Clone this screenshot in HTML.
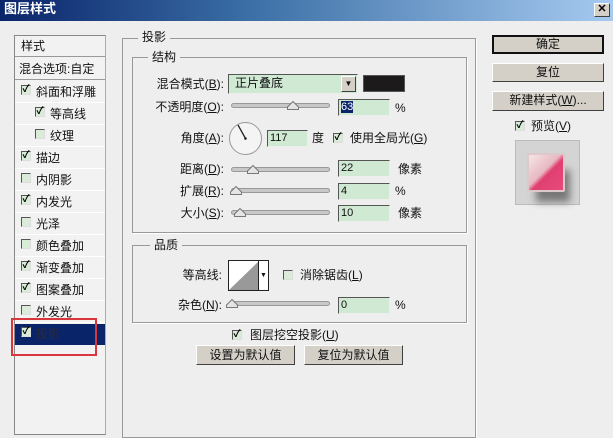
<!DOCTYPE html>
<html><head><meta charset="utf-8"><style>
*{margin:0;padding:0;box-sizing:border-box}
body{width:613px;height:426px;overflow:hidden;background:#eeeeee;font-family:"Liberation Sans","Noto Sans CJK SC","WenQuanYi Zen Hei",sans-serif;font-size:12px;color:#111;position:relative}
.a{position:absolute;white-space:nowrap;line-height:14px}
.title{left:0;top:0;width:613px;height:21px;background:linear-gradient(90deg,#0a246a 0%,#3a6ea5 40%,#a6caf0 100%);color:#fff;font-weight:bold;font-size:13px;padding:2px 0 0 4px}
.x{right:3px;top:3px;width:16px;height:14px;background:#d4d0c8;border:1px solid;border-color:#fff #404040 #404040 #fff;font-size:11px;text-align:center;line-height:11px;color:#000;font-weight:bold}
.panel{left:14px;top:35px;width:92px;height:400px;border:1px solid #888;border-right-color:#aaa;background:#f2f2f2}
.row{position:absolute;left:0;width:90px;height:22px;border-bottom:1px solid #fff}
.cb{position:absolute;width:10px;height:10px;border:1px solid;border-color:#555 #ddd #ddd #555;background:#d8ecd8;font-size:10px;line-height:8px;text-align:center;font-weight:bold;color:#000}
.grp{border:1px solid #999;box-shadow:1px 1px 0 #fff}
.inp{position:absolute;height:17px;background:#cfe9d3;border:1px solid;border-color:#555 #eee #eee #555;padding-left:2px;line-height:14px;font-size:11px}
.trk{position:absolute;height:5px;border-radius:3px;background:#c8c8c8;border:1px solid #999}
.thumb{position:absolute;width:12px;height:9px}
.btn{position:absolute;background:#d4d0c8;border:1px solid;border-color:#fff #404040 #404040 #fff;text-align:center;line-height:16px;font-size:12px}
.lbl{position:absolute;text-align:right;width:100px}
</style></head><body>
<div class="a title">图层样式</div>
<div class="a x">✕</div>

<div class="a panel">
<div class="row" style="top:0;height:21px;border-bottom:1px solid #999"><span class="a" style="left:6px;top:3px">样式</span></div>
<div class="row" style="top:21px;height:23px;border-bottom:1px solid #999"><span class="a" style="left:4px;top:5px">混合选项:自定</span></div>
</div>
<div class="a" style="left:15px;top:324px;width:90px;height:21px;background:#0a246a"></div>
<div id="list"></div>

<div class="a" style="left:11px;top:318px;width:86px;height:38px;border:2px solid #d9363e"></div>

<div class="a grp" style="left:122px;top:38px;width:354px;height:400px"></div>
<div class="a" style="left:138px;top:30px;background:#eee;padding:0 4px">投影</div>
<div class="a grp" style="left:132px;top:57px;width:335px;height:176px"></div>
<div class="a" style="left:148px;top:50px;background:#eee;padding:0 4px">结构</div>
<div class="a grp" style="left:132px;top:245px;width:335px;height:78px"></div>
<div class="a" style="left:150px;top:238px;background:#eee;padding:0 4px">品质</div>

<div class="a lbl" style="left:124px;top:77px">混合模式(<u>B</u>):</div>
<div class="inp" style="left:228px;top:74px;width:130px;height:20px;font-size:12px;line-height:17px;padding-left:6px">正片叠底</div>
<div class="btn" style="left:341px;top:76px;width:15px;height:16px;font-size:8px;line-height:14px">▼</div>
<div class="a" style="left:363px;top:75px;width:42px;height:17px;background:#1c1a1a;border:1px solid #555"></div>

<div class="a lbl" style="left:124px;top:100px">不透明度(<u>O</u>):</div>
<div class="trk" style="left:231px;top:103px;width:99px"></div><svg class="thumb" style="left:287px;top:101px"><polygon points="6,0.5 11.5,6 11.5,8.5 0.5,8.5 0.5,6" fill="#e4e4e4" stroke="#777"/></svg>
<div class="inp" style="left:338px;top:99px;width:52px"><span style="background:#0a246a;color:#fff">63</span></div>
<div class="a" style="left:395px;top:101px">%</div>

<div class="a lbl" style="left:124px;top:131px">角度(<u>A</u>):</div>
<div class="a" style="left:229px;top:122px;width:33px;height:33px;border-radius:50%;border:1px solid #999;background:#f4f4f4"></div>
<svg class="a" style="left:229px;top:122px" width="33" height="33"><line x1="16.5" y1="16.5" x2="9" y2="3" stroke="#222" stroke-width="1.3"/><circle cx="16.5" cy="16.5" r="1.3" fill="#222"/></svg>
<div class="inp" style="left:267px;top:130px;width:41px">117</div>
<div class="a" style="left:312px;top:131px">度</div>
<div class="cb" style="left:333px;top:133px">✓</div>
<div class="a" style="left:350px;top:131px">使用全局光(<u>G</u>)</div>

<div class="a lbl" style="left:124px;top:162px">距离(<u>D</u>):</div>
<div class="trk" style="left:231px;top:167px;width:99px"></div><svg class="thumb" style="left:247px;top:165px"><polygon points="6,0.5 11.5,6 11.5,8.5 0.5,8.5 0.5,6" fill="#e4e4e4" stroke="#777"/></svg>
<div class="inp" style="left:338px;top:160px;width:52px">22</div>
<div class="a" style="left:398px;top:162px">像素</div>

<div class="a lbl" style="left:124px;top:184px">扩展(<u>R</u>):</div>
<div class="trk" style="left:231px;top:188px;width:99px"></div><svg class="thumb" style="left:230px;top:186px"><polygon points="6,0.5 11.5,6 11.5,8.5 0.5,8.5 0.5,6" fill="#e4e4e4" stroke="#777"/></svg>
<div class="inp" style="left:338px;top:183px;width:52px">4</div>
<div class="a" style="left:395px;top:184px">%</div>

<div class="a lbl" style="left:124px;top:206px">大小(<u>S</u>):</div>
<div class="trk" style="left:231px;top:210px;width:99px"></div><svg class="thumb" style="left:234px;top:208px"><polygon points="6,0.5 11.5,6 11.5,8.5 0.5,8.5 0.5,6" fill="#e4e4e4" stroke="#777"/></svg>
<div class="inp" style="left:338px;top:205px;width:52px">10</div>
<div class="a" style="left:398px;top:206px">像素</div>

<div class="a lbl" style="left:122px;top:268px">等高线:</div>
<div class="a" style="left:228px;top:260px;width:41px;height:31px;border:1px solid #222;background:#fff"></div>
<svg class="a" style="left:229px;top:261px" width="30" height="29"><polygon points="0,29 30,0 30,29" fill="#999"/></svg>
<div class="a" style="left:258px;top:261px;width:10px;height:29px;border-left:1px solid #222;background:#fff;font-size:7px;text-align:center;line-height:29px">▼</div>
<div class="cb" style="left:283px;top:270px"></div>
<div class="a" style="left:300px;top:268px">消除锯齿(<u>L</u>)</div>

<div class="a lbl" style="left:122px;top:298px">杂色(<u>N</u>):</div>
<div class="trk" style="left:231px;top:301px;width:99px"></div><svg class="thumb" style="left:226px;top:299px"><polygon points="6,0.5 11.5,6 11.5,8.5 0.5,8.5 0.5,6" fill="#e4e4e4" stroke="#777"/></svg>
<div class="inp" style="left:338px;top:297px;width:52px">0</div>
<div class="a" style="left:395px;top:298px">%</div>

<div class="cb" style="left:232px;top:330px">✓</div>
<div class="a" style="left:250px;top:328px">图层挖空投影(<u>U</u>)</div>
<div class="btn" style="left:196px;top:345px;width:99px;height:20px;line-height:18px">设置为默认值</div>
<div class="btn" style="left:304px;top:345px;width:99px;height:20px;line-height:18px">复位为默认值</div>

<div class="btn" style="left:492px;top:35px;width:112px;height:19px;border:2px solid #111;line-height:15px">确定</div>
<div class="btn" style="left:492px;top:63px;width:112px;height:19px">复位</div>
<div class="btn" style="left:492px;top:91px;width:112px;height:20px">新建样式(<u>W</u>)...</div>
<div class="cb" style="left:515px;top:121px">✓</div>
<div class="a" style="left:531px;top:119px">预览(<u>V</u>)</div>
<div class="a" style="left:515px;top:140px;width:65px;height:65px;background:#d4d4d4;border:1px solid #bbb"></div>
<div class="a" style="left:536px;top:170px;width:34px;height:32px;background:#777;filter:blur(4px)"></div>
<div class="a" style="left:527px;top:153px;width:38px;height:39px;background:linear-gradient(135deg,#f5e6e6 0%,#e8b8c0 45%,#e04070 55%,#e84a7e 100%);border:2px solid #ddc8cc;border-radius:2px"></div>

<script>
var it=[["斜面和浮雕",1,0],["等高线",1,1],["纹理",0,1],["描边",1,0],["内阴影",0,0],["内发光",1,0],["光泽",0,0],["颜色叠加",0,0],["渐变叠加",1,0],["图案叠加",1,0],["外发光",0,0],["投影",1,0]];
var h="";
for(var i=0;i<it.length;i++){var y=81+i*22,x=it[i][2]?35:21;var sel=i==11;
h+='<div class="cb" style="left:'+x+'px;top:'+(y+4)+'px">'+(it[i][1]?'✓':'')+'</div>';
h+='<div class="a" style="left:'+(x+15)+'px;top:'+(y+4)+'px;'+(sel?'color:#2a2a3a;':'')+'">'+it[i][0]+'</div>';
if(i<11)h+='<div class="a" style="left:15px;top:'+(y+21)+'px;width:90px;height:1px;background:#fff"></div>';}
document.getElementById("list").innerHTML=h;
</script>
</body></html>
